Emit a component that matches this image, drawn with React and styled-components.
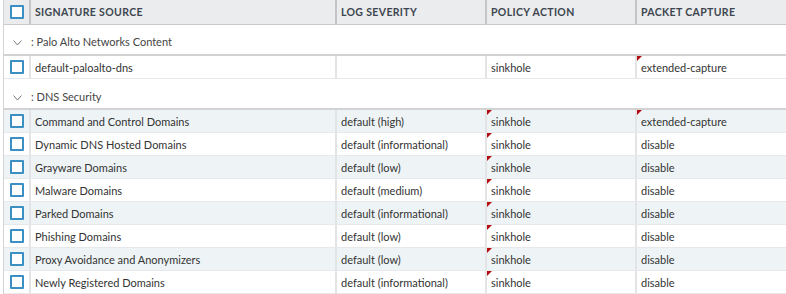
import React from 'react';
import styled, { createGlobalStyle } from 'styled-components';

const GlobalStyle = createGlobalStyle`
  html, body {
    margin: 0;
    padding: 0;
    background: #fff;
  }
  body {
    font-family: Lato, "Open Sans", sans-serif;
    font-size: 11px;
    color: #333;
  }
`;

const COLS = '25px 306px 150px 150px 151px';

const Table = styled.div`
  margin-left: 3px;
  border-left: 1px solid #d4d4d4;
  width: 783px;
  height: 294px;
  overflow: hidden;
`;

const HeaderRow = styled.div`
  display: grid;
  grid-template-columns: ${COLS};
  height: 25px;
  background: #ebeced;
  border-bottom: 1px solid #c9cacb;
  box-sizing: border-box;
`;

const HeadCell = styled.div`
  display: flex;
  align-items: center;
  border-left: ${p => (p.$first ? 'none' : '2px solid #c4c5c6')};
  font-weight: 700;
  font-size: 10.5px;
  letter-spacing: 0.35px;
  color: #3d4650;
  text-transform: uppercase;
  justify-content: ${p => (p.$first ? 'center' : 'flex-start')};
  padding-left: ${p => (p.$first ? '0' : '4px')};
`;

const GroupRow = styled.div`
  display: flex;
  align-items: center;
  height: ${p => p.$h}px;
  box-sizing: border-box;
  padding: ${p => p.$pt}px 0 0 9px;
  border-bottom: 2px solid #d2d2d2;
  color: #444;
  gap: 9px;
`;

const Chevron = styled.svg`
  width: 9px;
  height: 6px;
  margin-top: 4px;
`;

const Row = styled.div`
  display: grid;
  grid-template-columns: ${COLS};
  height: 23px;
  box-sizing: border-box;
  background: ${p => (p.$stripe ? '#eef4f6' : '#fff')};
  border-bottom: 1px solid #e6e8e9;
`;

const Cell = styled.div`
  position: relative;
  display: flex;
  align-items: center;
  border-left: ${p => (p.$first ? 'none' : '2px solid #e2e4e5')};
  white-space: nowrap;
  overflow: hidden;
  justify-content: ${p => (p.$first ? 'center' : 'flex-start')};
  padding-left: ${p => (p.$first ? '0' : '4px')};
`;

const Dirty = styled.span`
  position: absolute;
  top: 0;
  left: -1px;
  width: 0;
  height: 0;
  border-top: 6px solid #b30d12;
  border-right: 6px solid transparent;
`;

const Check = styled.span`
  display: inline-block;
  width: 14px;
  height: 14px;
  box-sizing: border-box;
  border: 2px solid #3c8fc2;
  background: #fff;
  border-radius: 1px;
`;

function Group({ label, h = 31, pt = 3 }) {
  return (
    <GroupRow $h={h} $pt={pt}>
      <Chevron viewBox="0 0 9 6">
        <path d="M0.5 0.5 L4.5 5 L8.5 0.5" fill="none" stroke="#777" strokeWidth="1" />
      </Chevron>
      <span>: {label}</span>
    </GroupRow>
  );
}

function DataRow({ name, severity, action, capture, stripe, dirtyAction, dirtyCapture }) {
  return (
    <Row $stripe={stripe}>
      <Cell $first><Check /></Cell>
      <Cell>{name}</Cell>
      <Cell>{severity}</Cell>
      <Cell>{dirtyAction && <Dirty />}{action}</Cell>
      <Cell>{dirtyCapture && <Dirty />}{capture}</Cell>
    </Row>
  );
}

const dnsRows = [
  ['Command and Control Domains', 'default (high)', 'extended-capture', true],
  ['Dynamic DNS Hosted Domains', 'default (informational)', 'disable', false],
  ['Grayware Domains', 'default (low)', 'disable', false],
  ['Malware Domains', 'default (medium)', 'disable', false],
  ['Parked Domains', 'default (informational)', 'disable', false],
  ['Phishing Domains', 'default (low)', 'disable', false],
  ['Proxy Avoidance and Anonymizers', 'default (low)', 'disable', false],
  ['Newly Registered Domains', 'default (informational)', 'disable', false],
];

export default function App() {
  return (
    <>
      <GlobalStyle />
      <Table>
        <HeaderRow>
          <HeadCell $first><Check /></HeadCell>
          <HeadCell>Signature Source</HeadCell>
          <HeadCell>Log Severity</HeadCell>
          <HeadCell>Policy Action</HeadCell>
          <HeadCell>Packet Capture</HeadCell>
        </HeaderRow>
        <Group label="Palo Alto Networks Content" h={31} pt={3} />
        <DataRow
          name="default-paloalto-dns"
          severity=""
          action="sinkhole"
          capture="extended-capture"
          dirtyCapture
        />
        <Group label="DNS Security" h={31} pt={5} />
        {dnsRows.map(([name, sev, cap, dirtyCap], i) => (
          <DataRow
            key={name}
            name={name}
            severity={sev}
            action="sinkhole"
            capture={cap}
            stripe={i % 2 === 0}
            dirtyAction
            dirtyCapture={dirtyCap}
          />
        ))}
      </Table>
    </>
  );
}
